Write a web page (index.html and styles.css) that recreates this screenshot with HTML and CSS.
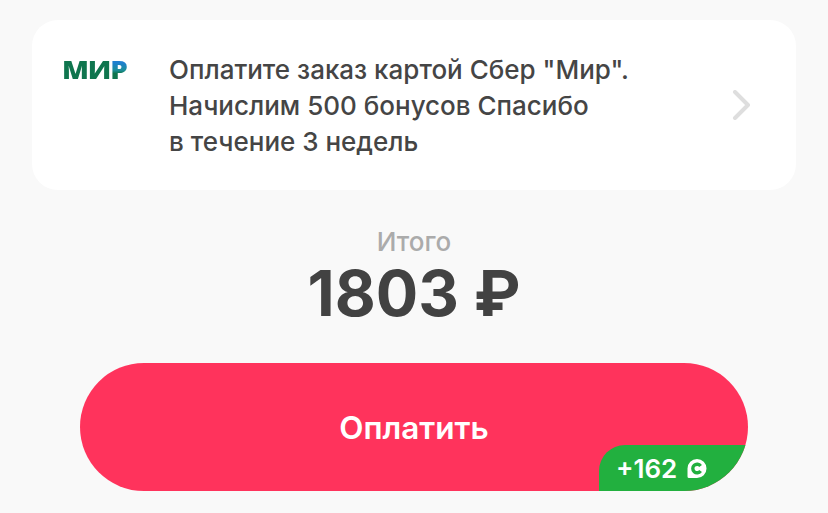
FILE: index.html
```html
<!DOCTYPE html>
<html lang="ru">
<head>
    <meta charset="UTF-8">
    <meta name="viewport" content="width=device-width, initial-scale=1.0">
    <title>Оплата заказа</title>
    <link rel="stylesheet" href="styles.css">
</head>
<body>
    <div class="container">
        <div class="promo-card">
            <div class="mir-logo">МИ<span class="mir-last">Р</span></div>
            <div class="promo-text">Оплатите заказ картой Сбер "Мир".<br>Начислим 500 бонусов Спасибо<br>в течение 3 недель</div>
            <svg class="chevron" width="20" height="30" viewBox="0 0 20 30">
                <path d="M3 2 L16 15 L3 28" fill="none" stroke="#dedede" stroke-width="4" stroke-linecap="round" stroke-linejoin="round"/>
            </svg>
        </div>

        <div class="total">
            <div class="total-label">Итого</div>
            <div class="total-value">1803 ₽</div>
        </div>

        <button class="pay-button">
            Оплатить
            <span class="bonus">
                +162
                <svg width="20" height="19" viewBox="0 0 20 19">
                    <path d="M10 0 A9.5 9.5 0 1 1 10 19 L2 19 Q0.5 19 0.5 17.5 L0.5 9.5 A9.5 9.5 0 0 1 10 0 Z" fill="#fff"/>
                    <path d="M13.6 7 A4.3 4.3 0 1 0 13.6 12" fill="none" stroke="#22b03f" stroke-width="3.4"/>
                </svg>
            </span>
        </button>
    </div>
</body>
</html>
```

FILE: styles.css
```css
body {
    margin: 0;
    background: #f9f9f9;
    font-family: Inter, "Liberation Sans", sans-serif;
}
.container {
    padding: 20px 32px 0;
    height: 493px;
    overflow: hidden;
}
.promo-card {
    display: flex;
    align-items: flex-start;
    height: 170px;
    box-sizing: border-box;
    padding: 32px 44px 0 32px;
    background: #fff;
    border-radius: 26px;
}
.mir-logo {
    width: 105px;
    flex-shrink: 0;
    margin-left: -2px;
    margin-right: 2px;
    font-family: "Open Sans", sans-serif;
    font-size: 24px;
    line-height: 36px;
    font-weight: 800;
    letter-spacing: -1px;
    color: #0f754e;
    transform: scaleX(1.16);
    transform-origin: left center;
}
.mir-last {
    background: linear-gradient(180deg, #1f7fd0 30%, #1c8f9a 52%, #0f754e 62%);
    -webkit-background-clip: text;
    background-clip: text;
    color: transparent;
}
.promo-text {
    flex: 1;
    font-size: 26px;
    line-height: 36px;
    font-weight: 500;
    color: #454545;
}
.chevron {
    margin-top: 38px;
}
.total {
    margin-top: 36px;
    text-align: center;
}
.total-label {
    font-size: 26px;
    line-height: 32px;
    font-weight: 500;
    color: #ababab;
}
.total-value {
    font-size: 63px;
    line-height: 70px;
    font-weight: 700;
    color: #424242;
}
.pay-button {
    display: block;
    position: relative;
    overflow: hidden;
    width: 668px;
    height: 128px;
    margin: 35px 0 0 48px;
    padding: 0;
    border: none;
    border-radius: 64px;
    background: #ff335c;
    color: #fff;
    font-family: inherit;
    font-size: 31.5px;
    font-weight: 600;
}
.bonus {
    position: absolute;
    right: 0;
    bottom: 0;
    width: 149px;
    height: 46px;
    box-sizing: border-box;
    padding-left: 17px;
    display: flex;
    align-items: center;
    gap: 10px;
    background: #22b03f;
    border-top-left-radius: 26px;
    font-size: 26px;
    font-weight: 600;
}
```
